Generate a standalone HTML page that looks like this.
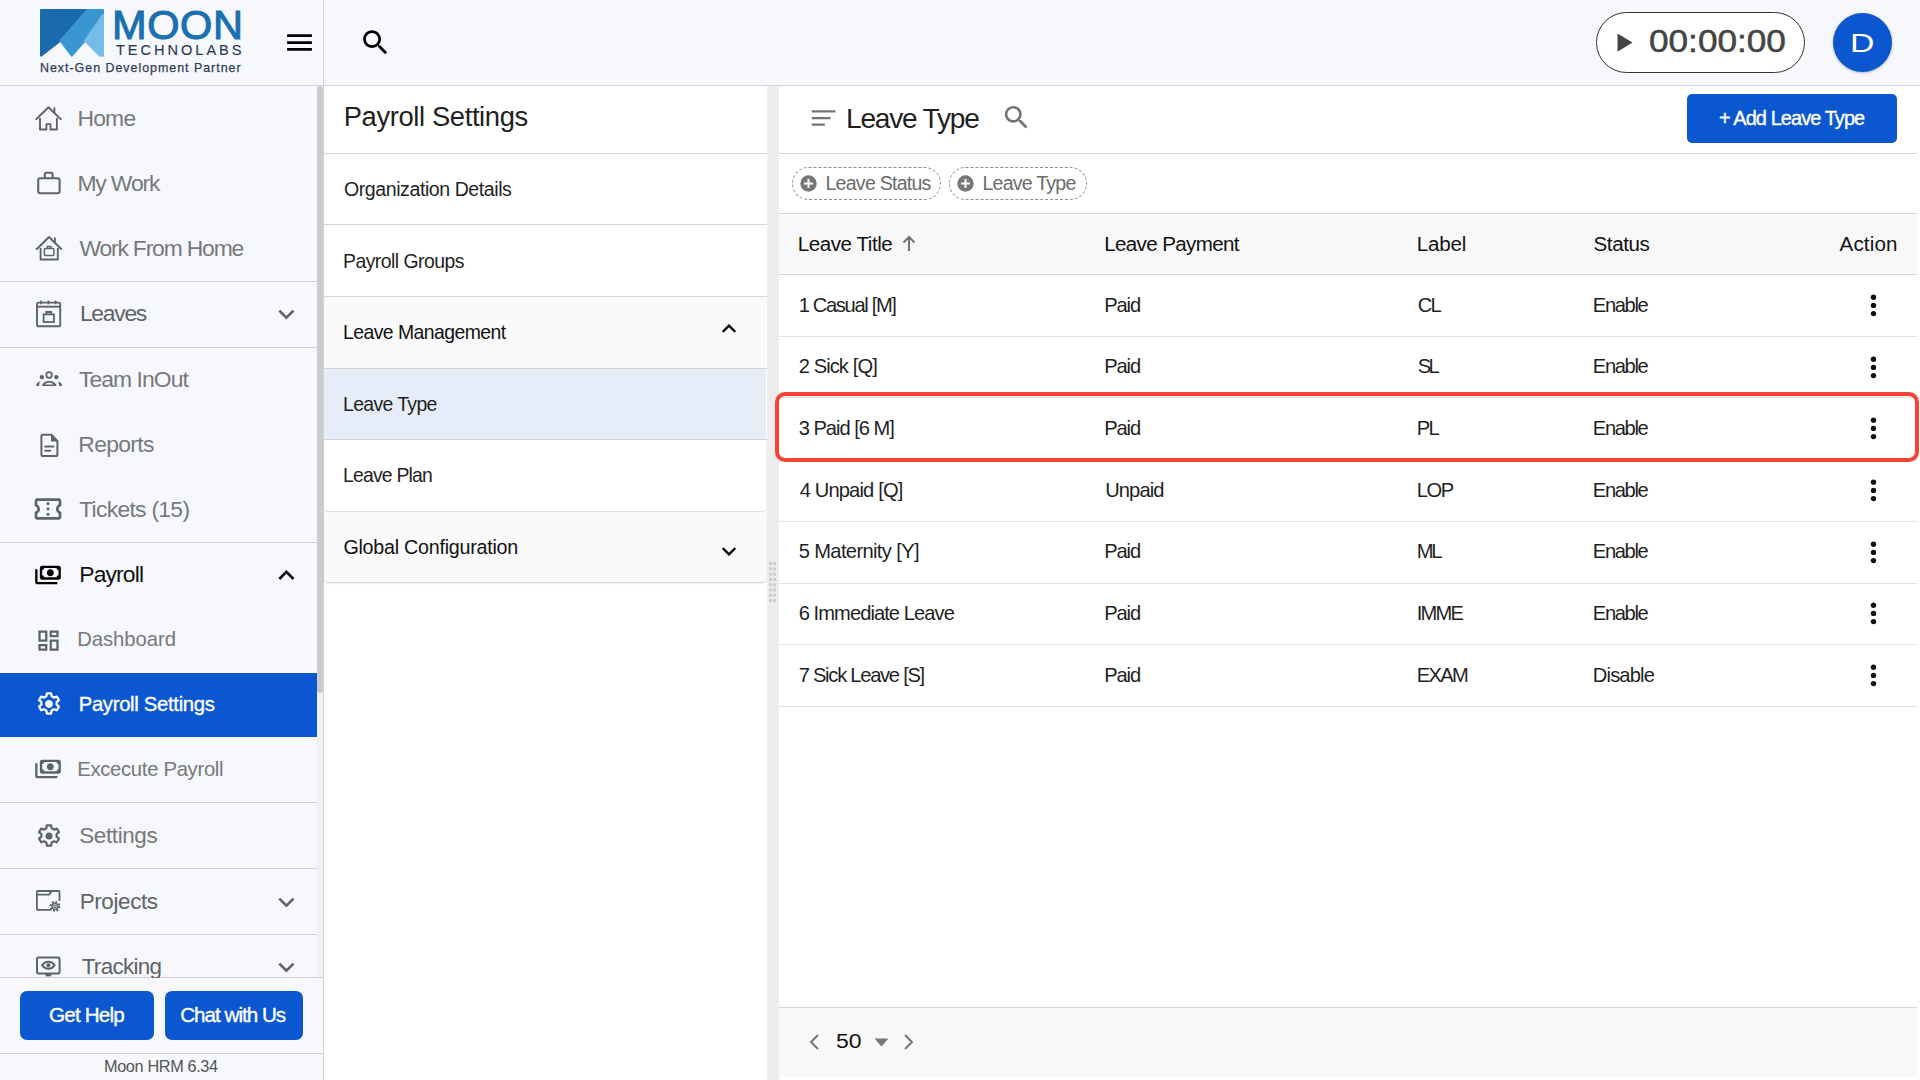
<!DOCTYPE html>
<html><head><meta charset="utf-8"><title>Leave Type</title>
<style>
html,body{margin:0;padding:0}
body{width:1920px;height:1080px;overflow:hidden;position:relative;background:#fff;font-family:'Liberation Sans',sans-serif}
.a{position:absolute}
.t{position:absolute;line-height:1;white-space:nowrap;font-family:'Liberation Sans',sans-serif}
svg{position:absolute;overflow:visible}
</style></head><body>
<!-- header -->
<div class="a" style="left:0;top:0;width:1920px;height:85px;background:#f6f8fc"></div>
<div class="a" style="left:0;top:85px;width:1920px;height:1px;background:#d4d6db"></div>
<!-- sidebar -->
<div class="a" style="left:0;top:86px;width:323px;height:994px;background:#f6f8fc"></div>
<div class="a" style="left:323px;top:0;width:1px;height:1080px;background:#d4d6db"></div>
<!-- scrollbar -->
<div class="a" style="left:317px;top:86px;width:6px;height:891px;background:#f1f1f1"></div>
<div class="a" style="left:317px;top:86px;width:6px;height:607px;background:#cbcbcb;border-radius:3px"></div>
<!-- sidebar separators -->
<div class="a" style="left:0;top:281px;width:317px;height:1px;background:#cdd0d6"></div>
<div class="a" style="left:0;top:347px;width:317px;height:1px;background:#cdd0d6"></div>
<div class="a" style="left:0;top:542px;width:317px;height:1px;background:#cdd0d6"></div>
<div class="a" style="left:0;top:802px;width:317px;height:1px;background:#cdd0d6"></div>
<div class="a" style="left:0;top:868px;width:317px;height:1px;background:#cdd0d6"></div>
<div class="a" style="left:0;top:934px;width:317px;height:1px;background:#cdd0d6"></div>
<!-- active item -->
<div class="a" style="left:0;top:673px;width:317px;height:64px;background:#0b57d0"></div>
<!-- sidebar footer -->
<div class="a" style="left:0;top:977px;width:323px;height:1px;background:#cdd0d6"></div>
<div class="a" style="left:0;top:1053px;width:323px;height:1px;background:#cdd0d6"></div>
<div class="a" style="left:20px;top:991px;width:134px;height:49px;background:#0b57d0;border-radius:7px"></div>
<div class="a" style="left:165px;top:991px;width:138px;height:49px;background:#0b57d0;border-radius:7px"></div>

<!-- middle panel -->
<div class="a" style="left:324px;top:153px;width:443px;height:1px;background:#d6d6d6"></div>
<div class="a" style="left:324px;top:224px;width:443px;height:1px;background:#d6d6d6"></div>
<div class="a" style="left:324px;top:296px;width:443px;height:1px;background:#d6d6d6"></div>
<div class="a" style="left:324px;top:297px;width:442px;height:71px;background:#fafafa"></div>
<div class="a" style="left:324px;top:368px;width:443px;height:1px;background:#d6d6d6"></div>
<div class="a" style="left:324px;top:369px;width:442px;height:70px;background:#e7edf8"></div>
<div class="a" style="left:324px;top:439px;width:443px;height:1px;background:#d6d6d6"></div>
<div class="a" style="left:324px;top:440px;width:442px;height:71px;background:#fff;border-radius:0 0 4px 4px;box-shadow:0 1px 2px rgba(0,0,0,.18)"></div>
<div class="a" style="left:324px;top:512px;width:442px;height:70px;background:#fafafa;border-radius:0 4px 4px 4px;box-shadow:0 1px 2px rgba(0,0,0,.2)"></div>
<!-- chevrons middle -->
<svg style="left:719px;top:319px" width="20" height="20" viewBox="0 0 24 24"><path d="M4.5 15.5L12 8l7.5 7.5" fill="none" stroke="#111" stroke-width="2.9"/></svg>
<svg style="left:719px;top:541px" width="20" height="20" viewBox="0 0 24 24"><path d="M4.5 8.5L12 16l7.5-7.5" fill="none" stroke="#111" stroke-width="2.9"/></svg>

<!-- splitter -->
<div class="a" style="left:767px;top:86px;width:12px;height:994px;background:#ededed"></div>
<svg style="left:767px;top:560px" width="12" height="46">
 <g fill="#cdcdcd">
 <rect x="2" y="2" width="3" height="3"/><rect x="6" y="2" width="3" height="3"/>
 <rect x="2" y="7.3" width="3" height="3"/><rect x="6" y="7.3" width="3" height="3"/>
 <rect x="2" y="12.6" width="3" height="3"/><rect x="6" y="12.6" width="3" height="3"/>
 <rect x="2" y="17.9" width="3" height="3"/><rect x="6" y="17.9" width="3" height="3"/>
 <rect x="2" y="23.2" width="3" height="3"/><rect x="6" y="23.2" width="3" height="3"/>
 <rect x="2" y="28.5" width="3" height="3"/><rect x="6" y="28.5" width="3" height="3"/>
 <rect x="2" y="33.8" width="3" height="3"/><rect x="6" y="33.8" width="3" height="3"/>
 <rect x="2" y="39.1" width="3" height="3"/><rect x="6" y="39.1" width="3" height="3"/>
 </g></svg>

<!-- right panel -->
<div class="a" style="left:779px;top:153px;width:1138px;height:1px;background:#d6d6d6"></div>
<div class="a" style="left:1687px;top:94px;width:210px;height:49px;background:#0b57d0;border-radius:5px"></div>
<!-- chips -->
<div class="a" style="left:792px;top:167px;width:147px;height:31px;border:1px dashed #8e8e8e;border-radius:17px"></div>
<div class="a" style="left:949px;top:167px;width:136px;height:31px;border:1px dashed #8e8e8e;border-radius:17px"></div>
<svg style="left:799px;top:174px" width="19" height="19" viewBox="0 0 19 19"><circle cx="9.5" cy="9.5" r="8.2" fill="#777"/><path d="M9.5 5v9M5 9.5h9" stroke="#fff" stroke-width="2"/></svg>
<svg style="left:956px;top:174px" width="19" height="19" viewBox="0 0 19 19"><circle cx="9.5" cy="9.5" r="8.2" fill="#777"/><path d="M9.5 5v9M5 9.5h9" stroke="#fff" stroke-width="2"/></svg>
<!-- table -->
<div class="a" style="left:779px;top:213px;width:1138px;height:1px;background:#d6d6d6"></div>
<div class="a" style="left:779px;top:214px;width:1138px;height:60px;background:#f8f8f8"></div>
<div class="a" style="left:779px;top:274px;width:1138px;height:1px;background:#d6d6d6"></div>
<div class="a" style="left:779px;top:336px;width:1138px;height:1px;background:#e0e0e0"></div>
<div class="a" style="left:779px;top:397px;width:1138px;height:1px;background:#e0e0e0"></div>
<div class="a" style="left:779px;top:459px;width:1138px;height:1px;background:#e0e0e0"></div>
<div class="a" style="left:779px;top:521px;width:1138px;height:1px;background:#e0e0e0"></div>
<div class="a" style="left:779px;top:583px;width:1138px;height:1px;background:#e0e0e0"></div>
<div class="a" style="left:779px;top:644px;width:1138px;height:1px;background:#e0e0e0"></div>
<div class="a" style="left:779px;top:706px;width:1138px;height:1px;background:#e0e0e0"></div>
<!-- sort arrow -->
<svg style="left:902px;top:235px" width="14" height="16" viewBox="0 0 14 16"><path d="M7 16V2.5M1.5 7.5L7 2l5.5 5.5" fill="none" stroke="#757575" stroke-width="2.1"/></svg>
<!-- kebabs -->
<svg style="left:1868px;top:292px" width="11" height="28"><g fill="#111"><circle cx="5.5" cy="5.2" r="2.7"/><circle cx="5.5" cy="13.4" r="2.7"/><circle cx="5.5" cy="21.6" r="2.7"/></g></svg>
<svg style="left:1868px;top:354px" width="11" height="28"><g fill="#111"><circle cx="5.5" cy="5.2" r="2.7"/><circle cx="5.5" cy="13.4" r="2.7"/><circle cx="5.5" cy="21.6" r="2.7"/></g></svg>
<svg style="left:1868px;top:415px" width="11" height="28"><g fill="#111"><circle cx="5.5" cy="5.2" r="2.7"/><circle cx="5.5" cy="13.4" r="2.7"/><circle cx="5.5" cy="21.6" r="2.7"/></g></svg>
<svg style="left:1868px;top:477px" width="11" height="28"><g fill="#111"><circle cx="5.5" cy="5.2" r="2.7"/><circle cx="5.5" cy="13.4" r="2.7"/><circle cx="5.5" cy="21.6" r="2.7"/></g></svg>
<svg style="left:1868px;top:539px" width="11" height="28"><g fill="#111"><circle cx="5.5" cy="5.2" r="2.7"/><circle cx="5.5" cy="13.4" r="2.7"/><circle cx="5.5" cy="21.6" r="2.7"/></g></svg>
<svg style="left:1868px;top:600px" width="11" height="28"><g fill="#111"><circle cx="5.5" cy="5.2" r="2.7"/><circle cx="5.5" cy="13.4" r="2.7"/><circle cx="5.5" cy="21.6" r="2.7"/></g></svg>
<svg style="left:1868px;top:662px" width="11" height="28"><g fill="#111"><circle cx="5.5" cy="5.2" r="2.7"/><circle cx="5.5" cy="13.4" r="2.7"/><circle cx="5.5" cy="21.6" r="2.7"/></g></svg>
<!-- highlight -->
<div class="a" style="left:775px;top:392px;width:1136px;height:62px;border:4px solid #f44336;border-radius:10px"></div>
<!-- pagination -->
<div class="a" style="left:779px;top:1007px;width:1138px;height:1px;background:#d6d6d6"></div>
<div class="a" style="left:779px;top:1008px;width:1138px;height:69px;background:#f8f8f8"></div>
<svg style="left:806px;top:1033px" width="16" height="18" viewBox="0 0 16 18"><path d="M12 2L5 9l7 7" fill="none" stroke="#777" stroke-width="2"/></svg>
<svg style="left:873px;top:1037px" width="17" height="11" viewBox="0 0 17 11"><path d="M1.5 1.5h14L8.5 9.5z" fill="#777"/></svg>
<svg style="left:901px;top:1033px" width="16" height="18" viewBox="0 0 16 18"><path d="M4 2l7 7-7 7" fill="none" stroke="#777" stroke-width="2"/></svg>

<!-- header items -->
<svg style="left:39px;top:8px" width="66" height="50" viewBox="39 8 66 50">
 <polygon points="41,10 87.3,10 60.4,40.7 41,55.7" fill="#1a6aad" stroke="#1a6aad" stroke-width="2" stroke-linejoin="round"/>
 <polygon points="87.3,10 103,10 103,13.8 85,40.7 71.8,55.7 60.4,40.7" fill="#3a96d0" stroke="#3a96d0" stroke-width="2" stroke-linejoin="round"/>
 <polygon points="103,14.8 103,55.7 100,55.7 85,40.7" fill="#74bde8" stroke="#74bde8" stroke-width="2" stroke-linejoin="round"/>
</svg>
<div class="t" style="left:112px;top:4px;font-size:41.5px;color:#1a70b0;letter-spacing:0.6px;-webkit-text-stroke:1.1px #1a70b0">MOON</div>
<div class="t" style="left:116px;top:43px;font-size:14.6px;color:#2a3a57;letter-spacing:2.95px;-webkit-text-stroke:0.15px #2a3a57">TECHNOLABS</div>
<div class="t" style="left:40px;top:62px;font-size:12.4px;color:#2e3b55;letter-spacing:1.0px;-webkit-text-stroke:0.25px #2e3b55">Next-Gen Development Partner</div>

<svg style="left:283px;top:26px" width="33" height="33" viewBox="0 0 24 24"><path d="M3 18h18v-2H3v2zm0-5h18v-2H3v2zm0-7v2h18V6H3z" fill="#000"/></svg>
<svg style="left:359px;top:26px" width="33" height="33" viewBox="0 0 24 24"><path d="M15.5 14h-.79l-.28-.27C15.41 12.59 16 11.11 16 9.5 16 5.91 13.09 3 9.5 3S3 5.91 3 9.5 5.91 16 9.5 16c1.61 0 3.09-.59 4.23-1.57l.27.28v.79l5 4.99L20.49 19l-4.99-5zm-6 0C7.01 14 5 11.99 5 9.5S7.01 5 9.5 5 14 7.01 14 9.5 11.99 14 9.5 14z" fill="#000"/></svg>

<div class="a" style="left:1596px;top:12px;width:207px;height:59px;border:1px solid #333;border-radius:31px;background:#fff"></div>
<svg style="left:1617px;top:33px" width="16" height="20" viewBox="0 0 16 20"><path d="M0.5 0.5L15.5 9.5 0.5 18.7z" fill="#444"/></svg>
<div class="a" style="left:1833px;top:13px;width:59px;height:59px;border-radius:50%;background:#0b57d0;box-shadow:0 1px 3px rgba(0,0,0,.25)"></div>

<!-- right title icons -->
<svg style="left:808px;top:103px" width="30" height="30" viewBox="0 0 24 24"><path d="M3 5.7h19v1.9H3zM3 11.2h15v1.8H3zM3 16.3h10.5v1.8H3z" fill="#757575"/></svg>
<svg style="left:1001px;top:102px" width="31" height="31" viewBox="0 0 24 24"><path d="M15.5 14h-.79l-.28-.27C15.41 12.59 16 11.11 16 9.5 16 5.91 13.09 3 9.5 3S3 5.91 3 9.5 5.91 16 9.5 16c1.61 0 3.09-.59 4.23-1.57l.27.28v.79l5 4.99L20.49 19l-4.99-5zm-6 0C7.01 14 5 11.99 5 9.5S7.01 5 9.5 5 14 7.01 14 9.5 11.99 14 9.5 14z" fill="#757575"/></svg>

<!-- sidebar icons -->
<!-- home -->
<svg style="left:30px;top:100px" width="40" height="40" viewBox="0 0 40 40"><g fill="none" stroke="#5f6368" stroke-width="1.9" stroke-linecap="round" stroke-linejoin="round"><path d="M6.2 19.2L18.5 7.2l12.3 12"/><path d="M24.4 8.2v4.3"/><path d="M10 18.6v10.9h6.4v-5.4h4.1v5.4h6.4V18.6"/></g></svg>
<!-- my work -->
<svg style="left:30px;top:165px" width="40" height="40" viewBox="0 0 40 40"><g fill="none" stroke="#5f6368" stroke-width="2.1" stroke-linejoin="round"><rect x="8.2" y="13.3" width="21.4" height="15" rx="2"/><path d="M14.8 13.3V9.2c0-.8.6-1.4 1.4-1.4h5c.8 0 1.4.6 1.4 1.4v4.1"/></g></svg>
<!-- wfh -->
<svg style="left:30px;top:230px" width="40" height="40" viewBox="0 0 40 40"><g fill="none" stroke="#5f6368" stroke-width="1.9" stroke-linecap="round" stroke-linejoin="round"><path d="M6.6 19.2L19 7l12.2 12"/><path d="M24.9 8.3v4.2"/><path d="M10.6 18.6v10.9h17.2V18.6"/></g><g fill="none" stroke="#5f6368" stroke-width="1.5"><rect x="14.4" y="18.4" width="9.5" height="7.2" rx="1"/><path d="M17.4 18.4v-1.9h3.5v1.9"/></g></svg>
<!-- leaves calendar -->
<svg style="left:30px;top:295px" width="40" height="40" viewBox="0 0 40 40"><g fill="none" stroke="#5f6368" stroke-width="1.9"><rect x="7" y="7.6" width="23.2" height="23.7" rx="1.6"/><path d="M7 11.7h23.2"/><path d="M11 5.6v3.6M18.4 5.6v3.6M25.6 5.6v3.6" stroke-width="1.7"/><rect x="13.6" y="19.4" width="10.3" height="7.6" stroke-width="1.8"/><path d="M16.3 19.4v-2.4h4.9v2.4" stroke-width="1.8"/></g></svg>
<!-- team inout (groups) -->
<svg style="left:30px;top:360px" width="40" height="40" viewBox="0 0 40 40"><circle cx="19.1" cy="15" r="2.8" fill="none" stroke="#5f6368" stroke-width="1.8"/><g fill="#5f6368"><circle cx="11.9" cy="17.1" r="2.2"/><circle cx="26.4" cy="17.1" r="2.2"/><path d="M11.9 26.1C12.5 22.5 15.5 21 19.2 21s6.7 1.5 7.3 5.1z"/><path d="M6.1 26.1c.2-2.2 1.7-4 4.1-4.5-.8 1.3-1.2 2.8-1.2 4.5z"/><path d="M32.2 26.1c-.2-2.2-1.7-4-4.1-4.5.8 1.3 1.2 2.8 1.2 4.5z"/></g><path d="M14.9 24.5c.9-1.1 2.4-1.7 4.3-1.7s3.4.6 4.3 1.7z" fill="#f6f8fc"/></svg>
<!-- reports -->
<svg style="left:30px;top:425px" width="40" height="40" viewBox="0 0 40 40"><g fill="none" stroke="#5f6368" stroke-width="2"><path d="M13 9.8h8.4l6 6v13.6c0 .9-.7 1.6-1.6 1.6H13c-.9 0-1.6-.7-1.6-1.6V11.4c0-.9.7-1.6 1.6-1.6z"/><path d="M15.3 21.4h8.2M15.3 25.8h5" stroke-linecap="round"/></g><path d="M21 9.8l6.6 6.6H21z" fill="#5f6368"/></svg>
<!-- tickets -->
<svg style="left:32px;top:493px" width="32" height="32" viewBox="0 0 24 24"><path fill="#5f6368" d="M22 10V6c0-1.11-.9-2-2-2H4c-1.1 0-1.99.89-1.99 2v4c1.1 0 1.99.9 1.99 2s-.89 2-2 2v4c0 1.1.9 2 2 2h16c1.1 0 2-.9 2-2v-4c-1.1 0-2-.9-2-2s.9-2 2-2zm-2-1.46c-1.19.69-2 1.990-2 3.46s.81 2.77 2 3.46V18H4v-2.54c1.19-.69 2-1.99 2-3.46 0-1.48-.8-2.77-1.99-3.46L4 6h16v2.54zM11 15h2v2h-2zm0-4h2v2h-2zm0-4h2v2h-2z"/></svg>
<!-- payroll (payments mirrored) -->
<svg style="left:34px;top:561px" width="28" height="28" viewBox="0 0 24 24"><g fill="#000"><circle cx="7" cy="6" r="1.7"/><circle cx="21" cy="6" r="1.7"/><circle cx="7" cy="14" r="1.7"/><circle cx="21" cy="14" r="1.7"/></g><g transform="translate(24,0) scale(-1,1)"><path fill="#000" d="M19 14V6c0-1.1-.9-2-2-2H3c-1.1 0-2 .9-2 2v8c0 1.1.9 2 2 2h14c1.1 0 2-.9 2-2zm-2 0H3V6h14v8zm-7-7c-1.66 0-3 1.34-3 3s1.34 3 3 3 3-1.34 3-3-1.34-3-3-3zm13 0v11c0 1.1-.9 2-2 2H4v-2h17V7h2z"/></g></svg>
<!-- dashboard -->
<svg style="left:35px;top:627px" width="27" height="27" viewBox="0 0 24 24"><path fill="#5f6368" d="M19 5v2h-4V5h4M9 5v6H5V5h4m10 8v6h-4v-6h4M9 17v2H5v-2h4M21 3h-8v6h8V3zM11 3H3v10h8V3zm10 8h-8v10h8V11zm-10 4H3v6h8v-6z"/></svg>
<!-- payroll settings gear (white) -->
<svg style="left:35px;top:690px" width="28" height="28" viewBox="0 0 24 24"><path fill="#fff" d="M12 15.5c1.93 0 3.5-1.57 3.5-3.5S13.93 8.5 12 8.5 8.5 10.07 8.5 12s1.57 3.5 3.5 3.5z" transform="translate(12 12) scale(.95) translate(-12 -12)"/><path fill="none" stroke="#fff" stroke-width="1.9" stroke-linejoin="round" d="M10.2 2.8h3.6l.5 2.6 1.9 1.1 2.5-.9 1.8 3.1-2 1.7v2.2l2 1.7-1.8 3.1-2.5-.9-1.9 1.1-.5 2.6h-3.6l-.5-2.6-1.9-1.1-2.5.9-1.8-3.1 2-1.7v-2.2l-2-1.7 1.8-3.1 2.5.9 1.9-1.1z"/></svg>
<!-- execute payroll -->
<svg style="left:34px;top:755px" width="28" height="28" viewBox="0 0 24 24"><g fill="#5f6368"><circle cx="7" cy="6" r="1.7"/><circle cx="21" cy="6" r="1.7"/><circle cx="7" cy="14" r="1.7"/><circle cx="21" cy="14" r="1.7"/></g><g transform="translate(24,0) scale(-1,1)"><path fill="#5f6368" d="M19 14V6c0-1.1-.9-2-2-2H3c-1.1 0-2 .9-2 2v8c0 1.1.9 2 2 2h14c1.1 0 2-.9 2-2zm-2 0H3V6h14v8zm-7-7c-1.66 0-3 1.34-3 3s1.34 3 3 3 3-1.34 3-3-1.34-3-3-3zm13 0v11c0 1.1-.9 2-2 2H4v-2h17V7h2z"/></g></svg>
<!-- settings gear -->
<svg style="left:35px;top:822px" width="28" height="28" viewBox="0 0 24 24"><circle cx="12" cy="12" r="3" fill="#5f6368"/><path fill="none" stroke="#5f6368" stroke-width="1.9" stroke-linejoin="round" d="M10.2 2.8h3.6l.5 2.6 1.9 1.1 2.5-.9 1.8 3.1-2 1.7v2.2l2 1.7-1.8 3.1-2.5-.9-1.9 1.1-.5 2.6h-3.6l-.5-2.6-1.9-1.1-2.5.9-1.8-3.1 2-1.7v-2.2l-2-1.7 1.8-3.1 2.5.9 1.9-1.1z"/></svg>
<!-- projects folder gear -->
<svg style="left:30px;top:880px" width="40" height="40" viewBox="0 0 40 40"><g fill="none" stroke="#5f6368" stroke-width="1.8" stroke-linejoin="round"><path d="M21.5 29.9H7.9c-.6 0-1-.4-1-1V12c0-.6.4-1 1-1h20.6c.6 0 1 .4 1 1v9"/><path d="M6.9 14.6h12.3l2.6-3.6"/></g><g transform="translate(25 26.3)"><circle r="4.1" fill="none" stroke="#5f6368" stroke-width="2.6" stroke-dasharray="1.7 1.5"/><circle r="3" fill="#f6f8fc" stroke="#5f6368" stroke-width="1.3"/><circle r="1.3" fill="none" stroke="#5f6368" stroke-width="1.1"/></g></svg>
<!-- tracking monitor eye -->
<svg style="left:30px;top:949px" width="40" height="40" viewBox="0 0 40 40"><g fill="none" stroke="#5f6368" stroke-width="2"><rect x="7" y="8.6" width="22.6" height="15.8" rx="1.6"/><path d="M12.2 16.3c3-4.6 9.4-4.6 12.4 0-3 4.6-9.4 4.6-12.4 0z" stroke-width="2"/></g><circle cx="18.4" cy="16.3" r="2" fill="#5f6368"/><path d="M15.5 26.2h5.8" stroke="#5f6368" stroke-width="2.4"/></svg>
<!-- sidebar chevrons -->
<svg style="left:276px;top:301.5px" width="20" height="20" viewBox="0 0 20 20"><path d="M3.3 8.6l7.1 7.1 7.1-7.1" fill="none" stroke="#5f6368" stroke-width="2.7"/></svg>
<svg style="left:276px;top:564px" width="20" height="20" viewBox="0 0 20 20"><path d="M3.3 15l7.1-7.1 7.1 7.1" fill="none" stroke="#111" stroke-width="2.7"/></svg>
<svg style="left:276px;top:889.5px" width="20" height="20" viewBox="0 0 20 20"><path d="M3.3 8.6l7.1 7.1 7.1-7.1" fill="none" stroke="#5f6368" stroke-width="2.7"/></svg>
<svg style="left:276px;top:954.5px" width="20" height="20" viewBox="0 0 20 20"><path d="M3.3 8.6l7.1 7.1 7.1-7.1" fill="none" stroke="#5f6368" stroke-width="2.7"/></svg>

<div class="t" style="left:77.40px;top:107.00px;font-size:22.9px;letter-spacing:-0.767px;color:#77787b;">Home</div>
<div class="t" style="left:77.40px;top:172.00px;font-size:22.9px;letter-spacing:-1.133px;color:#77787b;">My Work</div>
<div class="t" style="left:79.40px;top:237.00px;font-size:22.9px;letter-spacing:-1.177px;color:#77787b;">Work From Home</div>
<div class="t" style="left:79.90px;top:302.00px;font-size:22.9px;letter-spacing:-1.280px;color:#5f6368;">Leaves</div>
<div class="t" style="left:79.00px;top:368.00px;font-size:22.9px;letter-spacing:-0.944px;color:#77787b;">Team InOut</div>
<div class="t" style="left:78.30px;top:433.00px;font-size:22.9px;letter-spacing:-0.683px;color:#77787b;">Reports</div>
<div class="t" style="left:79.20px;top:498.00px;font-size:22.9px;letter-spacing:-0.718px;color:#77787b;">Tickets (15)</div>
<div class="t" style="left:79.30px;top:563.00px;font-size:22.9px;letter-spacing:-0.883px;color:#111111;">Payroll</div>
<div class="t" style="left:77.20px;top:629.00px;font-size:20.29px;letter-spacing:-0.062px;color:#77787b;">Dashboard</div>
<div class="t" style="left:78.70px;top:694.00px;font-size:20.29px;letter-spacing:-0.313px;color:#ffffff;-webkit-text-stroke:0.35px #ffffff;">Payroll Settings</div>
<div class="t" style="left:77.20px;top:759.00px;font-size:20.29px;letter-spacing:-0.313px;color:#77787b;">Excecute Payroll</div>
<div class="t" style="left:79.30px;top:825.00px;font-size:22.46px;letter-spacing:-0.400px;color:#77787b;">Settings</div>
<div class="t" style="left:79.70px;top:891.00px;font-size:22.46px;letter-spacing:-0.386px;color:#5f6368;">Projects</div>
<div class="t" style="left:81.70px;top:956.00px;font-size:22.46px;letter-spacing:-0.700px;color:#5f6368;">Tracking</div>
<div class="t" style="left:343.70px;top:103.00px;font-size:27.39px;letter-spacing:-0.380px;color:#1f1f1f;">Payroll Settings</div>
<div class="t" style="left:344.00px;top:180.00px;font-size:19.57px;letter-spacing:-0.437px;color:#1f1f1f;">Organization Details</div>
<div class="t" style="left:343.00px;top:252.00px;font-size:19.42px;letter-spacing:-0.523px;color:#1f1f1f;">Payroll Groups</div>
<div class="t" style="left:343.00px;top:323.00px;font-size:19.42px;letter-spacing:-0.553px;color:#111111;">Leave Management</div>
<div class="t" style="left:343.00px;top:395.00px;font-size:19.42px;letter-spacing:-0.622px;color:#1f1f1f;">Leave Type</div>
<div class="t" style="left:343.00px;top:466.00px;font-size:19.42px;letter-spacing:-0.811px;color:#1f1f1f;">Leave Plan</div>
<div class="t" style="left:343.40px;top:538.00px;font-size:19.71px;letter-spacing:-0.242px;color:#111111;">Global Configuration</div>
<div class="t" style="left:846.00px;top:105.00px;font-size:28.12px;letter-spacing:-1.222px;color:#1f1f1f;">Leave Type</div>
<div class="t" style="left:1719.00px;top:109.00px;font-size:19.93px;letter-spacing:-0.900px;color:#ffffff;-webkit-text-stroke:0.35px #ffffff;">+ Add Leave Type</div>
<div class="t" style="left:825.50px;top:174.00px;font-size:19.57px;letter-spacing:-0.755px;color:#6b6b6b;">Leave Status</div>
<div class="t" style="left:982.50px;top:174.00px;font-size:19.57px;letter-spacing:-0.778px;color:#6b6b6b;">Leave Type</div>
<div class="t" style="left:797.70px;top:234.00px;font-size:20.58px;letter-spacing:-0.440px;color:#111111;">Leave Title</div>
<div class="t" style="left:1104.20px;top:234.00px;font-size:20.58px;letter-spacing:-0.633px;color:#111111;">Leave Payment</div>
<div class="t" style="left:1416.70px;top:234.00px;font-size:20.58px;letter-spacing:-0.175px;color:#111111;">Label</div>
<div class="t" style="left:1593.50px;top:234.00px;font-size:20.58px;letter-spacing:-0.400px;color:#111111;">Status</div>
<div class="t" style="left:1839.50px;top:234.00px;font-size:20.58px;letter-spacing:0.160px;color:#111111;">Action</div>
<div class="t" style="left:798.70px;top:295.00px;font-size:20.14px;letter-spacing:-1.336px;color:#1f1f1f;">1 Casual [M]</div>
<div class="t" style="left:1104.20px;top:295.00px;font-size:20.14px;letter-spacing:-1.133px;color:#1f1f1f;">Paid</div>
<div class="t" style="left:1417.70px;top:295.00px;font-size:20.14px;letter-spacing:-1.700px;color:#1f1f1f;">CL</div>
<div class="t" style="left:1592.80px;top:295.00px;font-size:20.14px;letter-spacing:-1.340px;color:#1f1f1f;">Enable</div>
<div class="t" style="left:798.70px;top:356.00px;font-size:20.14px;letter-spacing:-0.911px;color:#1f1f1f;">2 Sick [Q]</div>
<div class="t" style="left:1104.20px;top:356.00px;font-size:20.14px;letter-spacing:-1.133px;color:#1f1f1f;">Paid</div>
<div class="t" style="left:1417.70px;top:356.00px;font-size:20.14px;letter-spacing:-2.500px;color:#1f1f1f;">SL</div>
<div class="t" style="left:1592.80px;top:356.00px;font-size:20.14px;letter-spacing:-1.340px;color:#1f1f1f;">Enable</div>
<div class="t" style="left:798.70px;top:418.00px;font-size:20.14px;letter-spacing:-1.027px;color:#1f1f1f;">3 Paid [6 M]</div>
<div class="t" style="left:1104.20px;top:418.00px;font-size:20.14px;letter-spacing:-1.133px;color:#1f1f1f;">Paid</div>
<div class="t" style="left:1416.70px;top:418.00px;font-size:20.14px;letter-spacing:-1.500px;color:#1f1f1f;">PL</div>
<div class="t" style="left:1592.80px;top:418.00px;font-size:20.14px;letter-spacing:-1.340px;color:#1f1f1f;">Enable</div>
<div class="t" style="left:799.70px;top:480.00px;font-size:20.14px;letter-spacing:-0.855px;color:#1f1f1f;">4 Unpaid [Q]</div>
<div class="t" style="left:1105.20px;top:480.00px;font-size:20.14px;letter-spacing:-0.900px;color:#1f1f1f;">Unpaid</div>
<div class="t" style="left:1416.70px;top:480.00px;font-size:20.14px;letter-spacing:-1.450px;color:#1f1f1f;">LOP</div>
<div class="t" style="left:1592.80px;top:480.00px;font-size:20.14px;letter-spacing:-1.340px;color:#1f1f1f;">Enable</div>
<div class="t" style="left:798.70px;top:541.00px;font-size:20.14px;letter-spacing:-0.636px;color:#1f1f1f;">5 Maternity [Y]</div>
<div class="t" style="left:1104.20px;top:541.00px;font-size:20.14px;letter-spacing:-1.133px;color:#1f1f1f;">Paid</div>
<div class="t" style="left:1416.70px;top:541.00px;font-size:20.14px;letter-spacing:-2.100px;color:#1f1f1f;">ML</div>
<div class="t" style="left:1592.80px;top:541.00px;font-size:20.14px;letter-spacing:-1.340px;color:#1f1f1f;">Enable</div>
<div class="t" style="left:798.70px;top:603.00px;font-size:20.14px;letter-spacing:-0.938px;color:#1f1f1f;">6 Immediate Leave</div>
<div class="t" style="left:1104.20px;top:603.00px;font-size:20.14px;letter-spacing:-1.133px;color:#1f1f1f;">Paid</div>
<div class="t" style="left:1416.70px;top:603.00px;font-size:20.14px;letter-spacing:-1.733px;color:#1f1f1f;">IMME</div>
<div class="t" style="left:1592.80px;top:603.00px;font-size:20.14px;letter-spacing:-1.340px;color:#1f1f1f;">Enable</div>
<div class="t" style="left:798.70px;top:665.00px;font-size:20.14px;letter-spacing:-1.260px;color:#1f1f1f;">7 Sick Leave [S]</div>
<div class="t" style="left:1104.20px;top:665.00px;font-size:20.14px;letter-spacing:-1.133px;color:#1f1f1f;">Paid</div>
<div class="t" style="left:1416.70px;top:665.00px;font-size:20.14px;letter-spacing:-1.667px;color:#1f1f1f;">EXAM</div>
<div class="t" style="left:1592.80px;top:665.00px;font-size:20.14px;letter-spacing:-0.833px;color:#1f1f1f;">Disable</div>
<div class="t" style="left:835.83px;top:1032.00px;font-size:19.57px;letter-spacing:0.000px;color:#111111;transform:scaleX(1.1750);transform-origin:0 0;">50</div>
<div class="t" style="left:1648.57px;top:26.00px;font-size:31.01px;letter-spacing:0.000px;color:#444444;-webkit-text-stroke:0.5px #444444;transform:scaleX(1.1345);transform-origin:0 0;">00:00:00</div>
<div class="t" style="left:1850.33px;top:31.00px;font-size:25.36px;letter-spacing:0.000px;color:#ffffff;transform:scaleX(1.3333);transform-origin:0 0;">D</div>
<!-- clip tracking row below 977: redraw footer bg strip over -->
<div class="a" style="left:0;top:978px;width:323px;height:75px;background:#f6f8fc"></div>
<div class="a" style="left:20px;top:991px;width:134px;height:49px;background:#0b57d0;border-radius:7px"></div>
<div class="a" style="left:165px;top:991px;width:138px;height:49px;background:#0b57d0;border-radius:7px"></div>
<div class="t" style="left:49.00px;top:1005.00px;font-size:20.65px;letter-spacing:-0.829px;color:#ffffff;-webkit-text-stroke:0.35px #ffffff;">Get Help</div>
<div class="t" style="left:180.20px;top:1005.00px;font-size:20.65px;letter-spacing:-1.000px;color:#ffffff;-webkit-text-stroke:0.35px #ffffff;">Chat with Us</div>
<div class="t" style="left:104.00px;top:1058.00px;font-size:16.3px;letter-spacing:-0.375px;color:#555555;">Moon HRM 6.34</div>
</body></html>
